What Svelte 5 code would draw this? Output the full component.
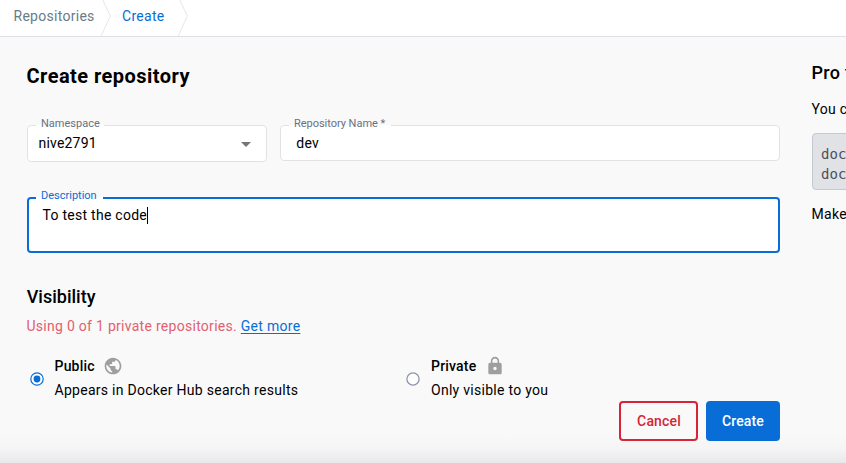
<script>
  let selected = $state('public');
  const crumbs = [
    { label: 'Repositories', active: false },
    { label: 'Create', active: true },
  ];
  const options = [
    { id: 'public', title: 'Public', text: 'Appears in Docker Hub search results' },
    { id: 'private', title: 'Private', text: 'Only visible to you' },
  ];
</script>

<div class="page">
  <nav>
    {#each crumbs as crumb}
      <span class="crumb" class:active={crumb.active}>{crumb.label}</span>
      <svg class="sep" width="12" height="36" viewBox="0 0 12 36"><path d="M2.3 -1 L10.3 16 L1.2 36" fill="none" stroke="#e4e6ea" /></svg>
    {/each}
  </nav>

  <div class="content">
    <main>
      <h1>Create repository</h1>
      <div class="row">
        <fieldset class="namespace">
          <legend>Namespace</legend>
          <span class="value">nive2791</span>
          <svg class="caret" width="10" height="5" viewBox="0 0 10 5"><path d="M0 0H10L5 5Z" fill="#757575" /></svg>
        </fieldset>
        <fieldset class="name">
          <legend>Repository Name *</legend>
          <span class="value">dev</span>
        </fieldset>
      </div>
      <fieldset class="description">
        <legend>Description</legend>
        <span class="value">To test the code<i class="cursor"></i></span>
      </fieldset>

      <h2 class="visibility">Visibility</h2>
      <p class="quota"><span>Using 0 of 1 private repositories.</span> <a href="#more">Get more</a></p>

      <div class="options">
        {#each options as option}
          <label class="option {option.id}">
            <input type="radio" name="visibility" value={option.id} bind:group={selected} />
            <svg class="radio" width="14" height="14" viewBox="0 0 14 14">
              {#if selected === option.id}
                <circle cx="7" cy="7" r="6.2" fill="#fff" stroke="#086dd7" stroke-width="1.2" />
                <circle cx="7" cy="7" r="3.4" fill="#086dd7" />
              {:else}
                <circle cx="7" cy="7" r="6.1" fill="#fff" stroke="#8f96aa" stroke-width="1.3" />
              {/if}
            </svg>
            <span class="copy">
              <span class="title">
                <strong>{option.title}</strong>
                <svg width="20" height="20" viewBox="0 0 24 24" fill="#9e9e9e">
                  {#if option.id === 'public'}
                    <path d="M12 2C6.48 2 2 6.48 2 12s4.48 10 10 10 10-4.48 10-10S17.52 2 12 2zm-1 17.93c-3.95-.49-7-3.85-7-7.93 0-.62.08-1.21.21-1.79L9 15v1c0 1.1.9 2 2 2v1.93zm6.9-2.54c-.26-.81-1-1.39-1.9-1.39h-1v-3c0-.55-.45-1-1-1H8v-2h2c.55 0 1-.45 1-1V7h2c1.1 0 2-.9 2-2v-.41c2.93 1.19 5 4.06 5 7.41 0 2.08-.8 3.97-2.1 5.39z" />
                  {:else}
                    <path d="M18 8h-1V6c0-2.76-2.24-5-5-5S7 3.24 7 6v2H6c-1.1 0-2 .9-2 2v10c0 1.1.9 2 2 2h12c1.1 0 2-.9 2-2V10c0-1.1-.9-2-2-2zm-6 9c-1.1 0-2-.9-2-2s.9-2 2-2 2 .9 2 2-.9 2-2 2zm3.1-9H8.9V6c0-1.71 1.39-3.1 3.1-3.1 1.71 0 3.1 1.39 3.1 3.1v2z" />
                  {/if}
                </svg>
              </span>
              <span class="detail">{option.text}</span>
            </span>
          </label>
        {/each}
      </div>

      <div class="actions">
        <button class="cancel">Cancel</button>
        <button class="create">Create</button>
      </div>
    </main>

    <aside>
      <h2>Pro tip</h2>
      <p>You can push a new image</p>
      <pre>docker tag
docker push</pre>
      <p class="make">Make sure</p>
    </aside>
  </div>
</div>

<style>
  :global(body) { margin: 0; overflow: hidden; }
  .page {
    box-sizing: border-box;
    width: 846px;
    height: 463px;
    overflow: hidden;
    display: flex;
    flex-direction: column;
    background: linear-gradient(#f9f9f9 0 434px, #f4f4f5 450px, #e8e8ea 463px);
    color: #000;
    font: 14px/20px Roboto, sans-serif;
    letter-spacing: 0.28px;
  }
  nav {
    flex: none;
    height: 36px;
    display: flex;
    background: #fff;
    border-bottom: 1px solid #dde0e5;
    padding-left: 13.5px;
  }
  .crumb { width: 86.5px; line-height: 32px; color: #677b88; }
  .crumb.active { width: 55px; color: #086dd7; }
  .sep { flex: none; margin-right: 10px; }
  .content { display: flex; align-items: flex-start; }
  main { width: 753px; padding-left: 27px; flex: none; }
  h1, h2, p, pre { margin: 0; }
  h1 { font-size: 20px; line-height: 28px; font-weight: 700; margin-top: 25px; letter-spacing: 0.46px; margin-left: -0.5px; }
  .row { display: flex; align-items: flex-start; gap: 13px; margin-top: 28px; }
  fieldset {
    box-sizing: border-box;
    min-width: 0;
    margin: 0;
    padding: 0;
    border: 1px solid #e1e2e6;
    border-radius: 4px;
    background: #fff;
    position: relative;
  }
  legend {
    box-sizing: border-box;
    width: 68px;
    padding: 0 0 0 5px;
    margin-left: 8px;
    font-size: 11px;
    line-height: 11px;
    height: 15px;
    white-space: nowrap;
    letter-spacing: 0;
    color: #677285;
  }
  .namespace { width: 240px; height: 44px; }
  .namespace legend { letter-spacing: 0; }
  .name { width: 500px; height: 43px; }
  .name legend { width: 102px; letter-spacing: -0.03px; }
  .description { height: 63px; margin-top: 28px; border: 2px solid #086dd7; }
  .description legend { color: #086dd7; margin-left: 7px; width: 67px; }
  .value { display: block; margin-left: 10.5px; letter-spacing: 0.2px; }
  .name .value { margin-left: 15.3px; }
  .description .value { margin-left: 13.5px; letter-spacing: 0.27px; }
  .cursor { display: inline-block; width: 1px; height: 17px; background: #000; vertical-align: -4px; margin-right: -1px; }
  .caret { position: absolute; right: 15px; top: 9px; }
  .visibility { font-size: 18px; line-height: 26px; font-weight: 500; margin-top: 31px; letter-spacing: 0; margin-left: -0.3px; }
  .quota { margin-top: 6px; color: #e2606f; margin-left: -0.5px; }
  .quota a { color: #086dd7; text-decoration: underline; text-underline-offset: 2px; }
  .options { display: flex; margin-top: 20px; }
  .option { width: 376px; display: flex; align-items: center; padding-left: 3px; box-sizing: border-box; }
  .option input { display: none; }
  .radio { margin: 2px 10.5px 0 0; flex: none; }
  .private .radio { margin-right: 11px; }
  .copy { display: flex; flex-direction: column; gap: 4px; }
  .title { display: flex; gap: 8px; height: 20px; }
  .private .title { gap: 8.5px; }
  strong { font-weight: 500; letter-spacing: 0.2px; }
  .detail { white-space: nowrap; }
  .actions { display: flex; justify-content: flex-end; gap: 8px; margin-top: 1px; }
  button {
    box-sizing: border-box;
    height: 40px;
    padding: 0;
    border-radius: 4px;
    font: 500 14px/20px Roboto, sans-serif;
    letter-spacing: 0.15px;
  }
  .cancel { width: 79px; padding-left: 1px; border: 2px solid #d52536; background: #f9f9f9; color: #d52536; }
  .create { width: 74px; border: 0; background: #086dd7; color: #fff; }
  aside { margin-left: 32px; width: 240px; flex: none; }
  aside h2 { font-size: 18px; line-height: 26px; font-weight: 500; margin-top: 23px; margin-left: -0.5px; }
  aside p { margin-top: 13px; margin-left: -0.5px; }
  pre {
    box-sizing: border-box;
    height: 57px;
    margin-top: 14px;
    padding: 10px 8px;
    border: 1px solid #c4c8d1;
    border-radius: 4px;
    background: #e1e2e6;
    color: #4a505c;
    font: 14px/20px "DejaVu Sans Mono", monospace;
    letter-spacing: 0.1px;
  }
  aside .make { margin-top: 14px; }
</style>
